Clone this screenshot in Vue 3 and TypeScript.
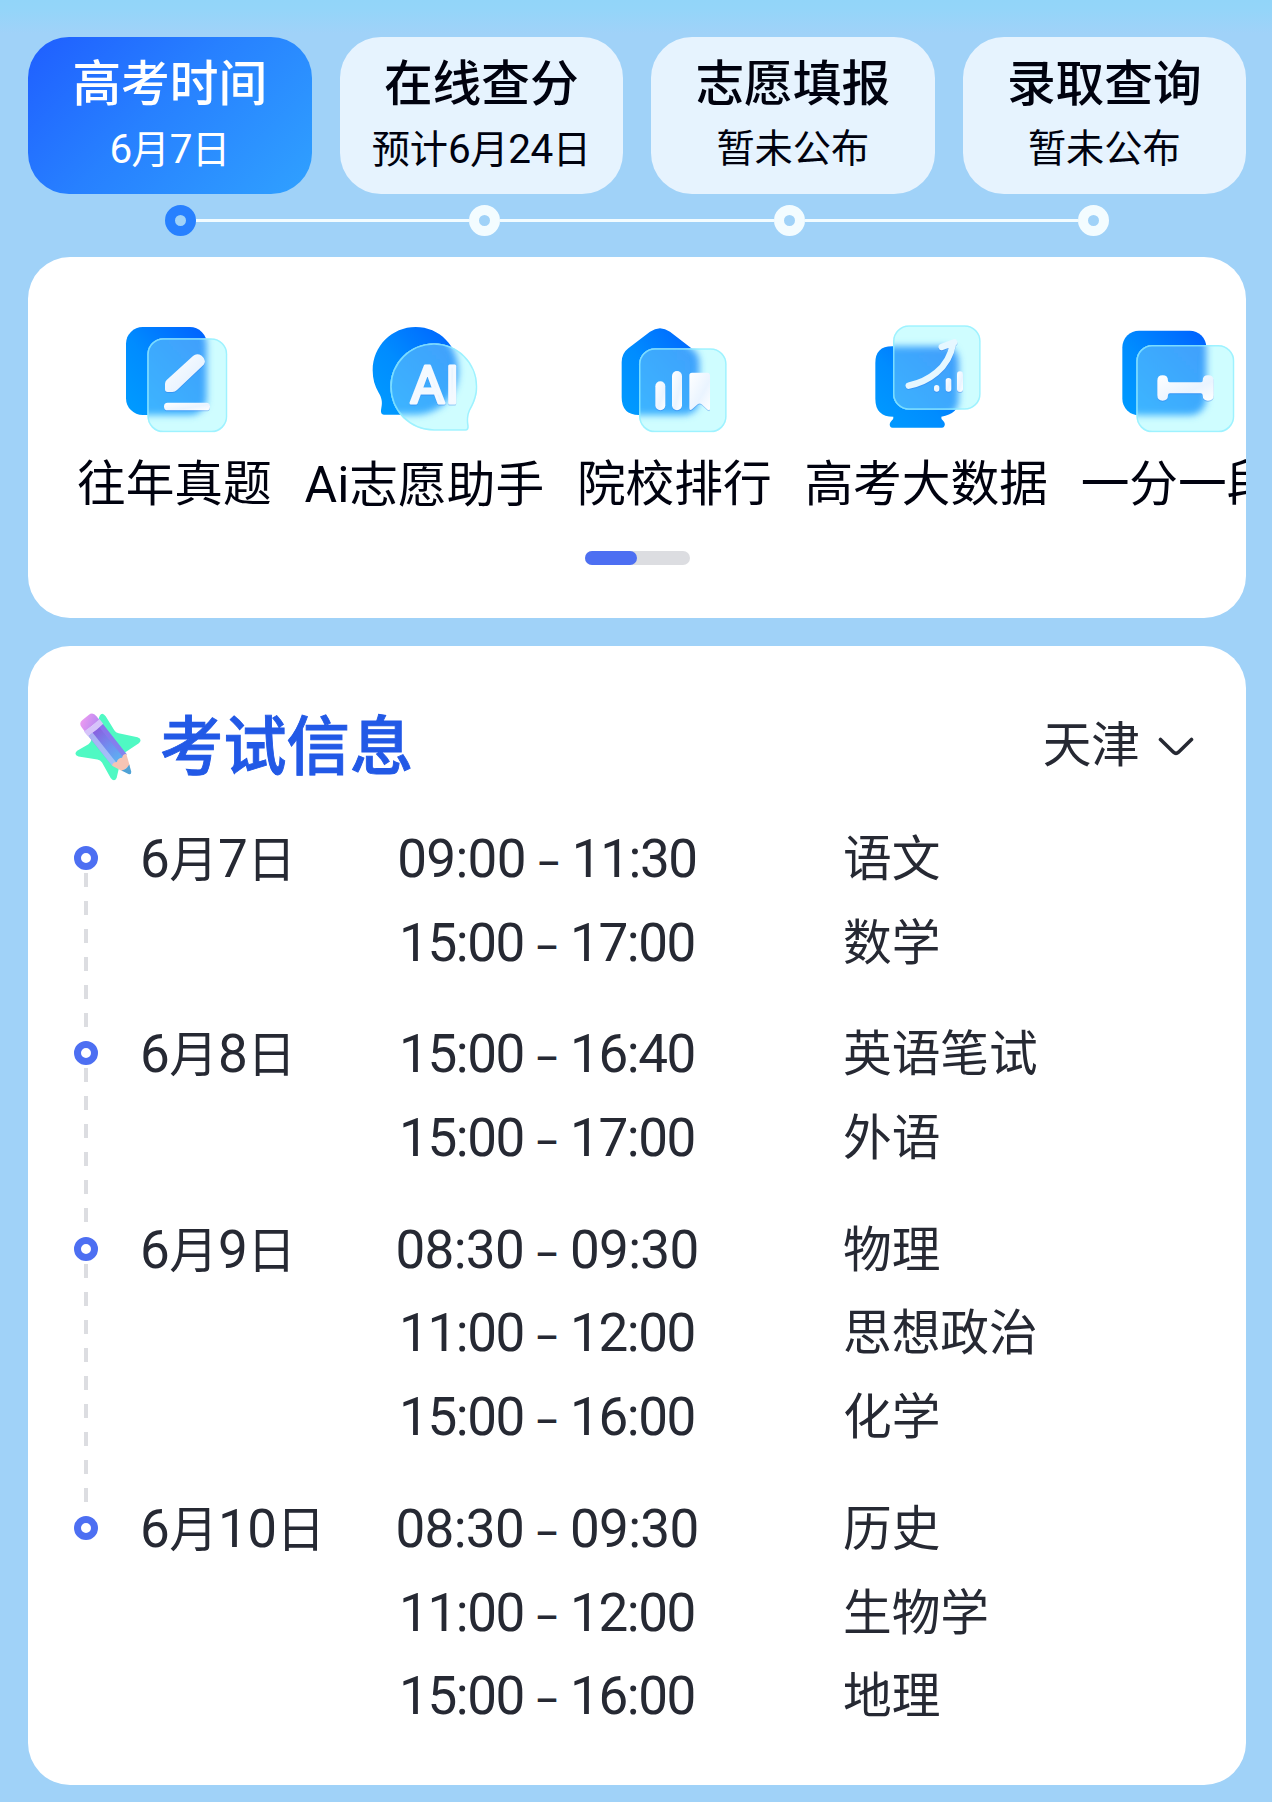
<template>
  <div class="page">
    <nav class="steps">
      <div v-for="(step, i) in steps" :key="step.title" class="step" :class="{ active: i === 0 }">
        <div class="step-title">{{ step.title }}</div>
        <div class="step-sub">
          <span v-for="(run, r) in runs(step.sub)" :key="r" :class="{ latin: run.latin }">{{ run.text }}</span>
        </div>
      </div>
    </nav>

    <div class="track">
      <template v-for="(step, i) in steps" :key="step.title">
        <i v-if="i > 0" class="track-line" />
        <i class="track-dot" :class="{ active: i === 0 }" />
      </template>
    </div>

    <section class="card tools">
      <div class="tool-row">
        <div v-for="tool in tools" :key="tool.id" class="tool">
          <svg class="tool-icon" :viewBox="tool.viewBox" aria-hidden="true">
            <defs>
              <linearGradient :id="`${tool.id}-back`" x1="0" y1="1" x2="1" y2="0">
                <stop offset="0" stop-color="#009cff" />
                <stop offset="0.45" stop-color="#008cff" />
                <stop offset="1" stop-color="#0060ff" />
              </linearGradient>
              <linearGradient :id="`${tool.id}-tint`" x1="0" y1="1" x2="1" y2="0">
                <stop offset="0" stop-color="#3db8ff" />
                <stop offset="1" stop-color="#3f9dfc" />
              </linearGradient>
              <linearGradient :id="`${tool.id}-ink`" x1="0" y1="0" x2="1" y2="1">
                <stop offset="0" stop-color="#ffffff" />
                <stop offset="0.6" stop-color="#eaf4ff" />
                <stop offset="1" stop-color="#ffffff" />
              </linearGradient>
              <filter :id="`${tool.id}-blur`" x="-20%" y="-20%" width="140%" height="140%">
                <feGaussianBlur stdDeviation="11" />
              </filter>
              <clipPath :id="`${tool.id}-clip`"><path :d="tool.front" /></clipPath>
            </defs>
            <path :d="tool.back" :fill="`url(#${tool.id}-back)`" />
            <path :d="tool.front" fill="#cffdff" />
            <g :clip-path="`url(#${tool.id}-clip)`">
              <path :d="tool.back" :fill="`url(#${tool.id}-tint)`" :filter="`url(#${tool.id}-blur)`" />
              <path :d="tool.front" fill="none" stroke="#8eeeff" stroke-opacity="0.75" stroke-width="9" />
            </g>
            <g class="ink" :fill="`url(#${tool.id}-ink)`">
              <template v-if="tool.id === 'papers'">
                <path d="M195 222 Q195 215 200 210 L279 138 Q290 128 305 137 Q321 150 311 164 L231 240 Q225 246 217 246 H203 Q195 246 195 238Z" />
                <rect x="192" y="278" width="138" height="23" rx="11" />
              </template>
              <text v-else-if="tool.id === 'ai'" class="ai-text" x="181 285" y="280">AI</text>
              <template v-else-if="tool.id === 'rank'">
                <rect x="166" y="214" width="30" height="87" rx="15" />
                <rect x="216" y="183" width="30" height="118" rx="15" />
                <path d="M276 188 H322 Q330 188 330 196 V296 Q330 303 323 299 L305 283 Q299 278 293 283 L276 298 Q268 303 268 294 V196 Q268 188 276 188Z" />
              </template>
              <template v-else-if="tool.id === 'data'">
                <path class="curve" d="M170 227 C228 215 290 176 303 101 M269 111 L307 97" />
                <rect x="246" y="225" width="16" height="20" rx="8" />
                <rect x="281" y="204" width="17" height="41" rx="8" />
                <rect x="315" y="184" width="18" height="62" rx="9" />
              </template>
              <path
                v-else
                d="M187 196 Q203 196 203 212 Q203 217 209 217 H301 Q307 217 307 212 Q307 196 323 196 Q340 196 340 212 V256 Q340 272 323 272 Q307 272 307 256 Q307 250 301 250 H209 Q203 250 203 256 Q203 272 187 272 Q171 272 171 256 V212 Q171 196 187 196Z"
              />
            </g>
          </svg>
          <div class="tool-label">
            <span v-for="(run, r) in runs(tool.label)" :key="r" :class="{ latin: run.latin }">{{ run.text }}</span>
          </div>
        </div>
      </div>
      <div class="pager"><i class="pager-on" /></div>
    </section>

    <section class="card exam">
      <header class="exam-head">
        <svg class="exam-icon" viewBox="70 70 202 205" aria-hidden="true">
          <defs>
            <linearGradient id="pencil-body" x1="0" y1="0" x2="1" y2="0">
              <stop offset="0" stop-color="#8a5fe0" />
              <stop offset="0.55" stop-color="#6f8ff0" />
              <stop offset="1" stop-color="#5cb2f0" />
            </linearGradient>
            <linearGradient id="pencil-eraser" x1="0" y1="1" x2="1" y2="0">
              <stop offset="0" stop-color="#f09cf0" />
              <stop offset="1" stop-color="#b98af2" />
            </linearGradient>
          </defs>
          <path
            d="M146 78 Q154 66 164 80 L190 122 Q194 129 203 131 L260 143 Q276 149 264 161 L221 190 Q213 196 211 206 L197 266 Q190 280 179 266 L153 219 Q148 211 139 210 L82 201 Q66 195 78 184 L112 164 Q120 158 122 148Z"
            fill="#4ff9c3"
          />
          <g transform="translate(107 88) rotate(51.5)">
            <path d="M12 -28 H26 V28 H12 Q-6 28 -6 12 V-12 Q-6 -28 12 -28Z" fill="url(#pencil-eraser)" />
            <path d="M42 -28 H158 L160 28 H42Z" fill="url(#pencil-body)" />
            <path d="M42 -28 H158 V-14 H42Z" fill="#8c78ee" opacity="0.75" />
            <path d="M42 12 H158 V28 H42Z" fill="#b7c9fa" opacity="0.75" />
            <path d="M24 -30 H42 Q46 0 42 30 H24 Q28 0 24 -30Z" fill="#d6c3fa" />
            <path d="M156 -28 Q150 -18 158 -11 Q150 0 158 10 Q150 20 158 28 L190 14 V-14Z" fill="#f5c4b4" />
            <path d="M187 -15 L208 -6 Q216 0 208 5 L187 15 Q193 0 187 -15Z" fill="#4fa2d6" />
          </g>
        </svg>
        <h2 class="exam-title">考试信息</h2>
        <div class="region">
          <span>天津</span>
          <svg class="chevron" viewBox="0 0 36 20" aria-hidden="true">
            <path d="M2.5 2.5 L15.5 15.2 Q18 17.4 20.5 15.2 L33.5 2.5" />
          </svg>
        </div>
      </header>

      <div class="days">
        <div v-for="day in days" :key="day.date" class="day">
          <div class="marker">
            <i class="marker-dot" />
            <i class="marker-line" />
          </div>
          <div class="date">
            <span v-for="(run, r) in runs(day.date)" :key="r" :class="{ latin: run.latin }">{{ run.text }}</span>
          </div>
          <div class="exams">
            <div v-for="exam in day.exams" :key="exam.subject" class="exam-line">
              <div class="time">
                <span class="clock" :class="{ tight: exam.from.includes('1') }">{{ exam.from }}</span>
                <span class="dash">–</span>
                <span class="clock" :class="{ tight: exam.to.includes('1') }">{{ exam.to }}</span>
              </div>
              <div class="subject">{{ exam.subject }}</div>
            </div>
          </div>
        </div>
      </div>
    </section>
  </div>
</template>

<script setup lang="ts">
interface Exam {
  from: string
  to: string
  subject: string
}

interface Day {
  date: string
  exams: Exam[]
}

const steps = [
  { title: '高考时间', sub: '6月7日' },
  { title: '在线查分', sub: '预计6月24日' },
  { title: '志愿填报', sub: '暂未公布' },
  { title: '录取查询', sub: '暂未公布' },
]

// rounded rect as a path, so every icon layer can be clipped the same way
function box(x1: number, y1: number, x2: number, y2: number, r: number) {
  return `M${x1 + r} ${y1} H${x2 - r} A${r} ${r} 0 0 1 ${x2} ${y1 + r} V${y2 - r} A${r} ${r} 0 0 1 ${x2 - r} ${y2} H${x1 + r} A${r} ${r} 0 0 1 ${x1} ${y2 - r} V${y1 + r} A${r} ${r} 0 0 1 ${x1 + r} ${y1}Z`
}

const tools = [
  {
    id: 'papers',
    label: '往年真题',
    viewBox: '0 0 450 420',
    back: box(78, 51, 320, 315, 50),
    front: box(142, 85, 382, 367, 48),
  },
  {
    id: 'ai',
    label: 'Ai志愿助手',
    viewBox: '0 0 450 420',
    back: 'M197 51 C268 51 325 108 325 183 C325 258 268 314 197 314 H102 C92 314 92 304 94 294 C98 275 95 263 86 248 C74 228 68 207 68 181 C68 108 126 51 197 51Z',
    front: 'M252 100 C324 100 382 158 382 230 C382 255 374 276 364 295 C354 312 353 328 356 347 C357 356 354 362 346 362 H252 C180 362 121 303 121 230 C121 158 180 100 252 100Z',
  },
  {
    id: 'rank',
    label: '院校排行',
    viewBox: '0 0 450 420',
    back: 'M150 65 Q180 44 210 65 L280 119 Q298 133 298 157 V262 Q298 315 246 315 H117 Q65 315 65 262 V157 Q65 130 85 115Z',
    front: box(117, 115, 380, 367, 48),
  },
  {
    id: 'data',
    label: '高考大数据',
    viewBox: '0 0 450 420',
    back: 'M120 109 H270 Q320 109 320 159 V270 Q320 312 268 320 Q266 326 274 333 Q282 342 276 350 Q274 353 269 353 H122 Q117 353 115 350 Q110 342 118 333 Q126 326 124 320 Q70 320 70 266 V159 Q70 109 120 109Z',
    front: box(123, 46, 386, 299, 48),
  },
  {
    id: 'segment',
    label: '一分一段',
    viewBox: '11 0 450 420',
    back: box(66, 62, 318, 316, 50),
    front: box(108, 105, 402, 367, 48),
  },
]

const days: Day[] = [
  {
    date: '6月7日',
    exams: [
      { from: '09:00', to: '11:30', subject: '语文' },
      { from: '15:00', to: '17:00', subject: '数学' },
    ],
  },
  {
    date: '6月8日',
    exams: [
      { from: '15:00', to: '16:40', subject: '英语笔试' },
      { from: '15:00', to: '17:00', subject: '外语' },
    ],
  },
  {
    date: '6月9日',
    exams: [
      { from: '08:30', to: '09:30', subject: '物理' },
      { from: '11:00', to: '12:00', subject: '思想政治' },
      { from: '15:00', to: '16:00', subject: '化学' },
    ],
  },
  {
    date: '6月10日',
    exams: [
      { from: '08:30', to: '09:30', subject: '历史' },
      { from: '11:00', to: '12:00', subject: '生物学' },
      { from: '15:00', to: '16:00', subject: '地理' },
    ],
  },
]

// digits and latin letters are set a little larger than the hanzi around them
function runs(text: string) {
  return (text.match(/[0-9A-Za-z]+|[^0-9A-Za-z]+/g) ?? []).map((t) => ({
    text: t,
    latin: /^[0-9A-Za-z]/.test(t),
  }))
}
</script>

<style>
body {
  margin: 0;
  background: #a0d2f8;
}
</style>

<style scoped>
.page {
  box-sizing: border-box;
  width: 1272px;
  height: 1802px;
  padding: 37px 26px 0 28px;
  overflow: hidden;
  background: linear-gradient(#92d5f9 0, #94d5f9 10px, #a0d2f8 34px);
  font-family: Roboto, 'Noto Sans CJK SC', sans-serif;
  font-size: 48.7px;
  color: #262933;
}

.steps {
  display: flex;
  gap: 28px;
}
.step {
  flex: 1;
  box-sizing: border-box;
  height: 157px;
  padding-top: 15px;
  border-radius: 41px;
  background: #e6f3fe;
  color: #00020f;
  text-align: center;
  white-space: nowrap;
}
.step.active {
  background: linear-gradient(135deg, #2062ff 5%, #2780ff 45%, #2f9eff 95%);
  color: #fff;
}
.step-title {
  font-weight: 500;
  line-height: 66px;
}
.step-sub {
  font-size: 38.2px;
  line-height: 62px;
}
.step-sub .latin {
  font-size: 40.5px;
  letter-spacing: -0.6px;
}

.track {
  display: flex;
  align-items: center;
  margin: 11px 0 21px;
  padding: 0 136.75px;
}
.track-dot {
  box-sizing: border-box;
  width: 31px;
  height: 31px;
  border: 10px solid #f3fcff;
  border-radius: 50%;
}
.track-dot.active {
  border-color: #2780ff;
}
.track-line {
  flex: 1;
  height: 3px;
  background: #f3fcff;
}

.card {
  border-radius: 42px;
  background: #fff;
}

.tools {
  padding: 53px 0;
  overflow: hidden;
  color: #00020f;
}
.tool-row {
  display: flex;
  gap: 32.8px;
  padding-left: 49px;
}
.tool {
  display: flex;
  flex: none;
  flex-direction: column;
  align-items: center;
}
.tool-icon {
  width: 150px;
  height: 140px;
  margin-left: 2px;
}
.ink {
  filter: drop-shadow(0 3px 2px rgba(40, 110, 230, 0.35));
}
.ai-text {
  font: 400 158px Roboto, sans-serif;
  stroke: #f4f9ff;
  stroke-width: 9;
  stroke-linejoin: round;
}
.curve {
  fill: none;
  stroke: #e6f7ff;
  stroke-width: 19;
  stroke-linecap: round;
  stroke-linejoin: round;
}
.tool-label {
  height: 66px;
  line-height: 70px;
  white-space: nowrap;
}
.tool-label .latin {
  font-size: 50px;
}
.pager {
  width: 105px;
  height: 14px;
  margin: 35px auto 0;
  border-radius: 7px;
  background: #dcdde1;
}
.pager-on {
  display: block;
  width: 52px;
  height: 14px;
  border-radius: 7px;
  background: #4d6ff2;
}

.exam {
  margin-top: 28px;
  padding: 60px 52px 48px 46px;
}
.exam-head {
  display: flex;
  align-items: center;
  height: 79px;
  margin-bottom: 31px;
}
.exam-icon {
  width: 68px;
  height: 68px;
  margin-top: 3px;
}
.exam-title {
  margin: 3px 0 0 18px;
  font-size: 63.3px;
  font-weight: 500;
  line-height: 79px;
  color: #2259e6;
  -webkit-text-stroke: 0.9px #2259e6;
}
.region {
  display: flex;
  align-items: center;
  gap: 18px;
  height: 79px;
  margin-left: auto;
  line-height: 79px;
}
.chevron {
  width: 36px;
  height: 20px;
  margin-top: 2px;
}
.chevron path {
  fill: none;
  stroke: #262933;
  stroke-width: 3.6;
  stroke-linecap: round;
}

.day {
  display: flex;
  padding-bottom: 28px;
}
.day:last-child {
  padding-bottom: 0;
}
.marker {
  display: flex;
  flex-direction: column;
  align-items: center;
  width: 24px;
  margin-bottom: -28px;
}
.marker-dot {
  box-sizing: border-box;
  flex: none;
  width: 24px;
  height: 24px;
  margin-top: 30px;
  border: 7px solid #4d6ff2;
  border-radius: 50%;
}
.marker-line {
  flex: 1;
  width: 4px;
  margin: 3px 0 -18px;
  background: repeating-linear-gradient(#dcdde1 0 14px, transparent 14px 28px);
}
.day:last-child .marker-line {
  display: none;
}
.date {
  width: 240px;
  height: 83.7px;
  padding-left: 42px;
  line-height: 87.5px;
  white-space: nowrap;
}
.date .latin {
  font-size: 53px;
  letter-spacing: -0.5px;
}
.exam-line {
  display: flex;
  height: 83.7px;
  line-height: 87.5px;
}
.time {
  display: flex;
  width: 334px;
  justify-content: center;
  font-size: 53px;
}
.clock {
  letter-spacing: -0.7px;
}
.clock.tight {
  letter-spacing: -1.4px;
}
.dash {
  width: 46px;
  font-family: 'Noto Sans', sans-serif;
  font-size: 44px;
  line-height: 85px;
  text-align: center;
}
.subject {
  padding-left: 129px;
  white-space: nowrap;
}
</style>
